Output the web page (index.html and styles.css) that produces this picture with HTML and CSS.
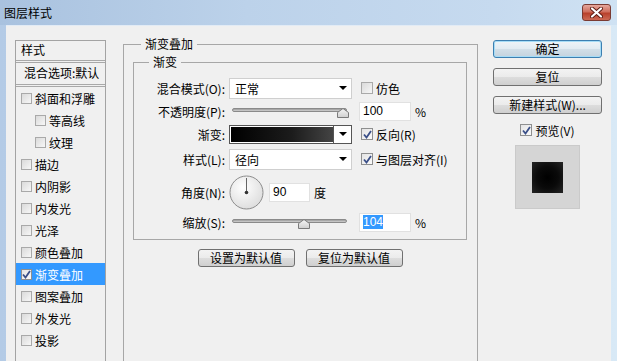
FILE: index.html
```html
<!DOCTYPE html>
<html>
<head>
  <title>图层样式</title>
  <link rel="stylesheet" href="styles.css">
</head>
<body>
  <div class="window">
    <div class="titlebar">
      <span class="title">图层样式</span>
      <span class="close">
        <svg width="13" height="11" viewBox="0 0 13 11">
          <path d="M2 1.5 L11 9.5 M11 1.5 L2 9.5" stroke="#5a1a12" stroke-width="4" stroke-linecap="round"/>
          <path d="M2 1.5 L11 9.5 M11 1.5 L2 9.5" stroke="#ffffff" stroke-width="2.2" stroke-linecap="round"/>
        </svg>
      </span>
    </div>

    <div class="client">
      <!-- left: list of effects -->
      <div class="style-list">
        <div class="list-head">样式</div>
        <div class="list-blend">混合选项:默认</div>
        <div class="item"><span class="cb"></span>斜面和浮雕</div>
        <div class="item sub"><span class="cb"></span>等高线</div>
        <div class="item sub"><span class="cb"></span>纹理</div>
        <div class="item"><span class="cb"></span>描边</div>
        <div class="item"><span class="cb"></span>内阴影</div>
        <div class="item"><span class="cb"></span>内发光</div>
        <div class="item"><span class="cb"></span>光泽</div>
        <div class="item"><span class="cb"></span>颜色叠加</div>
        <div class="item selected"><span class="cb on"><svg width="9" height="9" viewBox="0 0 9 9"><path d="M1 4.5 L3.5 7.5 L8 1" fill="none" stroke="#3a4f88" stroke-width="1.8"/></svg></span>渐变叠加</div>
        <div class="item"><span class="cb"></span>图案叠加</div>
        <div class="item"><span class="cb"></span>外发光</div>
        <div class="item"><span class="cb"></span>投影</div>
      </div>

      <!-- middle: gradient overlay settings -->
      <fieldset class="group outer">
        <legend>渐变叠加</legend>
        <fieldset class="group inner">
          <legend>渐变</legend>

          <div class="row">
            <span class="label">混合模式(O):</span>
            <div class="select"><span>正常</span><span class="arrow"></span></div>
            <label class="check"><span class="cb"></span>仿色</label>
          </div>

          <div class="row">
            <span class="label">不透明度(P):</span>
            <div class="slider">
              <div class="track"></div>
              <svg class="thumb" style="left: 108px" width="12" height="10" viewBox="0 0 12 10">
                <defs><linearGradient id="tg1" x1="0" y1="0" x2="0" y2="1"><stop offset="0" stop-color="#f6f6f6"/><stop offset="1" stop-color="#cfcfcf"/></linearGradient></defs>
                <path d="M0.5 9.5 V4.5 L6 0.5 L11.5 4.5 V9.5 Z" fill="url(#tg1)" stroke="#7a7a7a"/>
              </svg>
            </div>
            <div class="field">100</div>
            <span class="unit">%</span>
          </div>

          <div class="row row-grad">
            <span class="label">渐变:</span>
            <div class="grad-picker">
              <div class="swatch"></div>
              <div class="grad-btn"><span class="arrow"></span></div>
            </div>
            <label class="check"><span class="cb on"><svg width="9" height="9" viewBox="0 0 9 9"><path d="M1 4.5 L3.5 7.5 L8 1" fill="none" stroke="#3a4f88" stroke-width="1.8"/></svg></span>反向(R)</label>
          </div>

          <div class="row row-style">
            <span class="label">样式(L):</span>
            <div class="select"><span>径向</span><span class="arrow"></span></div>
            <label class="check"><span class="cb on"><svg width="9" height="9" viewBox="0 0 9 9"><path d="M1 4.5 L3.5 7.5 L8 1" fill="none" stroke="#3a4f88" stroke-width="1.8"/></svg></span>与图层对齐(I)</label>
          </div>

          <div class="row row-angle">
            <span class="label">角度(N):</span>
            <svg class="dial" width="35" height="35" viewBox="0 0 35 35">
              <defs><radialGradient id="dg" cx="0.4" cy="0.35" r="0.7"><stop offset="0" stop-color="#ffffff"/><stop offset="1" stop-color="#dcdcdc"/></radialGradient></defs>
              <circle cx="17.5" cy="17.5" r="16.5" fill="url(#dg)" stroke="#8c8c8c"/>
              <line x1="17.5" y1="17.5" x2="17.5" y2="3" stroke="#666" stroke-width="1"/>
              <circle cx="17.5" cy="17.5" r="1.8" fill="#333"/>
            </svg>
            <div class="field field-angle">90</div>
            <span class="unit">度</span>
          </div>

          <div class="row row-scale">
            <span class="label">缩放(S):</span>
            <div class="slider">
              <div class="track"></div>
              <svg class="thumb" style="left: 69px" width="12" height="10" viewBox="0 0 12 10">
                <defs><linearGradient id="tg2" x1="0" y1="0" x2="0" y2="1"><stop offset="0" stop-color="#f6f6f6"/><stop offset="1" stop-color="#cfcfcf"/></linearGradient></defs>
                <path d="M0.5 9.5 V4.5 L6 0.5 L11.5 4.5 V9.5 Z" fill="url(#tg2)" stroke="#7a7a7a"/>
              </svg>
            </div>
            <div class="field"><span class="sel">104</span></div>
            <span class="unit">%</span>
          </div>
        </fieldset>

        <div class="defaults">
          <button class="btn wide">设置为默认值</button>
          <button class="btn wide">复位为默认值</button>
        </div>
      </fieldset>

      <!-- right: dialog actions and preview -->
      <div class="actions">
        <button class="btn default">确定</button>
        <button class="btn">复位</button>
        <button class="btn">新建样式(W)...</button>
        <label class="check preview-check"><span class="cb on"><svg width="9" height="9" viewBox="0 0 9 9"><path d="M1 4.5 L3.5 7.5 L8 1" fill="none" stroke="#3a4f88" stroke-width="1.8"/></svg></span>预览(V)</label>
        <div class="preview">
          <div class="preview-square"></div>
        </div>
      </div>
    </div>
  </div>
</body>
</html>
```

FILE: styles.css
```css
* {
  box-sizing: border-box;
}

body {
  margin: 0;
  width: 617px;
  height: 361px;
  overflow: hidden;
  font-family: "Liberation Sans", "Noto Sans CJK SC", sans-serif;
  font-size: 12px;
  color: #000;
}

.window {
  width: 617px;
  height: 361px;
  display: flex;
  flex-direction: column;
  background: linear-gradient(to right, #b4cbe6, #cddff2 60%, #d8e9f6);
}

.titlebar {
  height: 25px;
  flex: none;
  display: flex;
  align-items: center;
  justify-content: space-between;
  padding: 0 6px 0 4px;
  background: linear-gradient(to right, #a9c2df, #bcd2ea 40%, #c6daef 80%, #cfe2f3);
}

.title {
  font-family: "Noto Sans CJK SC", sans-serif;
  font-size: 12px;
  line-height: 16px;
}

.close {
  width: 29px;
  height: 17px;
  display: flex;
  align-items: center;
  justify-content: center;
  border: 1px solid #7a3a32;
  border-radius: 3px;
  background: linear-gradient(#e5a79c, #cf6f5e 45%, #b8412c 55%, #cc6a55);
}

.client {
  flex: 1;
  margin: 0 6px;
  display: flex;
  align-items: flex-start;
  background: #f0f0f0;
  border-top: 1px solid #e2ebf5;
}

/* effects list */
.style-list {
  margin: 14px 0 0 9px;
  width: 91px;
  height: 340px;
  flex: none;
  border: 1px solid #a3a3a3;
  background: #f0f0f0;
  font-family: "Noto Sans CJK SC", sans-serif;
}

.list-head {
  height: 22px;
  line-height: 17px;
  padding-left: 5px;
  border-bottom: 3px double #a8a8a8;
}

.list-blend {
  height: 24px;
  line-height: 20px;
  padding-left: 8px;
  white-space: nowrap;
  overflow: hidden;
  border-bottom: 3px double #a8a8a8;
}

.item {
  height: 22px;
  display: flex;
  align-items: center;
  padding-left: 5px;
  white-space: nowrap;
}

.item.sub {
  padding-left: 19px;
}

.item.selected {
  background: #3399ff;
  color: #fff;
}

.cb {
  width: 11px;
  height: 11px;
  flex: none;
  margin-right: 3px;
  display: inline-flex;
  align-items: center;
  justify-content: center;
  border: 1px solid #a9a9a9;
  background: linear-gradient(135deg, #dadada, #f7f7f7);
}

.cb.on {
  background: linear-gradient(135deg, #e4e4e4, #fafafa);
  border-color: #8e8f8f;
}

/* group boxes */
.group {
  margin: 0;
  border: 1px solid #a7a7a7;
}

.group legend {
  font-family: "Noto Sans CJK SC", sans-serif;
  line-height: 16px;
  padding: 0 4px;
}

.outer {
  margin: 10px 0 0 17px;
  width: 355px;
  height: 400px;
  flex: none;
  padding: 0 10px 0 9px;
}

.outer > legend {
  margin-left: 8px;
}

.inner {
  margin-top: 2px;
  padding: 7px 0 6px 0;
}

.inner > legend {
  margin-left: 15px;
}

.row {
  height: 22px;
  display: flex;
  align-items: center;
  white-space: nowrap;
}

.row + .row {
  margin-top: 1px;
}

.row.row-style {
  margin-top: 3px;
}

.row.row-angle {
  height: 36px;
  margin-top: 4px;
}

.label {
  width: 91px;
  margin-right: 4px;
  text-align: right;
  font-family: "Noto Sans CJK SC", sans-serif;
}

.select {
  width: 123px;
  height: 21px;
  display: flex;
  align-items: center;
  justify-content: space-between;
  padding: 0 4px 0 5px;
  background: #fff;
  border: 1px solid #cfcfcf;
  font-family: "Noto Sans CJK SC", sans-serif;
}

.arrow {
  width: 0;
  height: 0;
  border-left: 4px solid transparent;
  border-right: 4px solid transparent;
  border-top: 4px solid #000;
}

.check {
  display: flex;
  align-items: center;
  margin-left: 9px;
  font-family: "Noto Sans CJK SC", sans-serif;
}

.check .cb {
  width: 12px;
  height: 12px;
  margin-right: 3px;
}

.slider {
  position: relative;
  width: 123px;
  height: 22px;
  padding: 8px 5px 0 3px;
}

.track {
  height: 4px;
  border-radius: 2px;
  border: 1px solid #8a8a8a;
  background: linear-gradient(#9a9a9a, #d2d2d2);
}

.thumb {
  position: absolute;
  top: 8px;
}

.field {
  width: 52px;
  height: 19px;
  margin-left: 7px;
  padding-left: 3px;
  line-height: 17px;
  background: #fff;
  border: 1px solid #e1e1e1;
}

.field-angle {
  width: 41px;
  margin-left: 5px;
}

.sel {
  background: #3399ff;
  color: #fff;
}

.unit {
  margin-left: 4px;
  font-family: "Noto Sans CJK SC", sans-serif;
}

.grad-picker {
  width: 123px;
  height: 19px;
  display: flex;
  border: 1px solid #555;
}

.swatch {
  flex: 1;
  border: 1px solid #fff;
  border-right: none;
  background: linear-gradient(to right, #000, #1c1c1c 60%, #444);
}

.grad-btn {
  width: 18px;
  display: flex;
  align-items: center;
  justify-content: center;
  background: #fff;
  border-left: 1px solid #555;
}

.defaults {
  display: flex;
  justify-content: center;
  gap: 11px;
  margin-top: 9px;
}

.btn {
  height: 18px;
  padding: 0;
  font-family: "Noto Sans CJK SC", "Liberation Sans", sans-serif;
  font-size: 12px;
  line-height: 14px;
  color: #000;
  border: 1px solid #707070;
  border-radius: 3px;
  background: linear-gradient(#f3f3f3, #ebebeb 50%, #dddddd 51%, #cfcfcf);
}

.btn.wide {
  width: 97px;
}

.actions {
  margin: 14px 0 0 15px;
  width: 109px;
  flex: none;
  display: flex;
  flex-direction: column;
}

.actions .btn {
  width: 109px;
  margin-bottom: 10px;
}

.btn.default {
  border-color: #3c7fb1;
  box-shadow: inset 0 0 0 1px #a6dcf6;
  background: linear-gradient(#eef4f8, #e1ebf2 50%, #d2dfe8 51%, #c4d3de);
}

.preview-check {
  margin: -2px 0 0 0;
  height: 16px;
  justify-content: center;
}

.preview {
  width: 65px;
  height: 64px;
  margin: 7px auto 0;
  display: flex;
  align-items: center;
  justify-content: center;
  background: #d5d5d5;
  border: 1px solid #cacaca;
}

.preview-square {
  width: 31px;
  height: 31px;
  background: radial-gradient(circle, #000 0%, #0a0a0a 50%, #242424 100%);
}
```
